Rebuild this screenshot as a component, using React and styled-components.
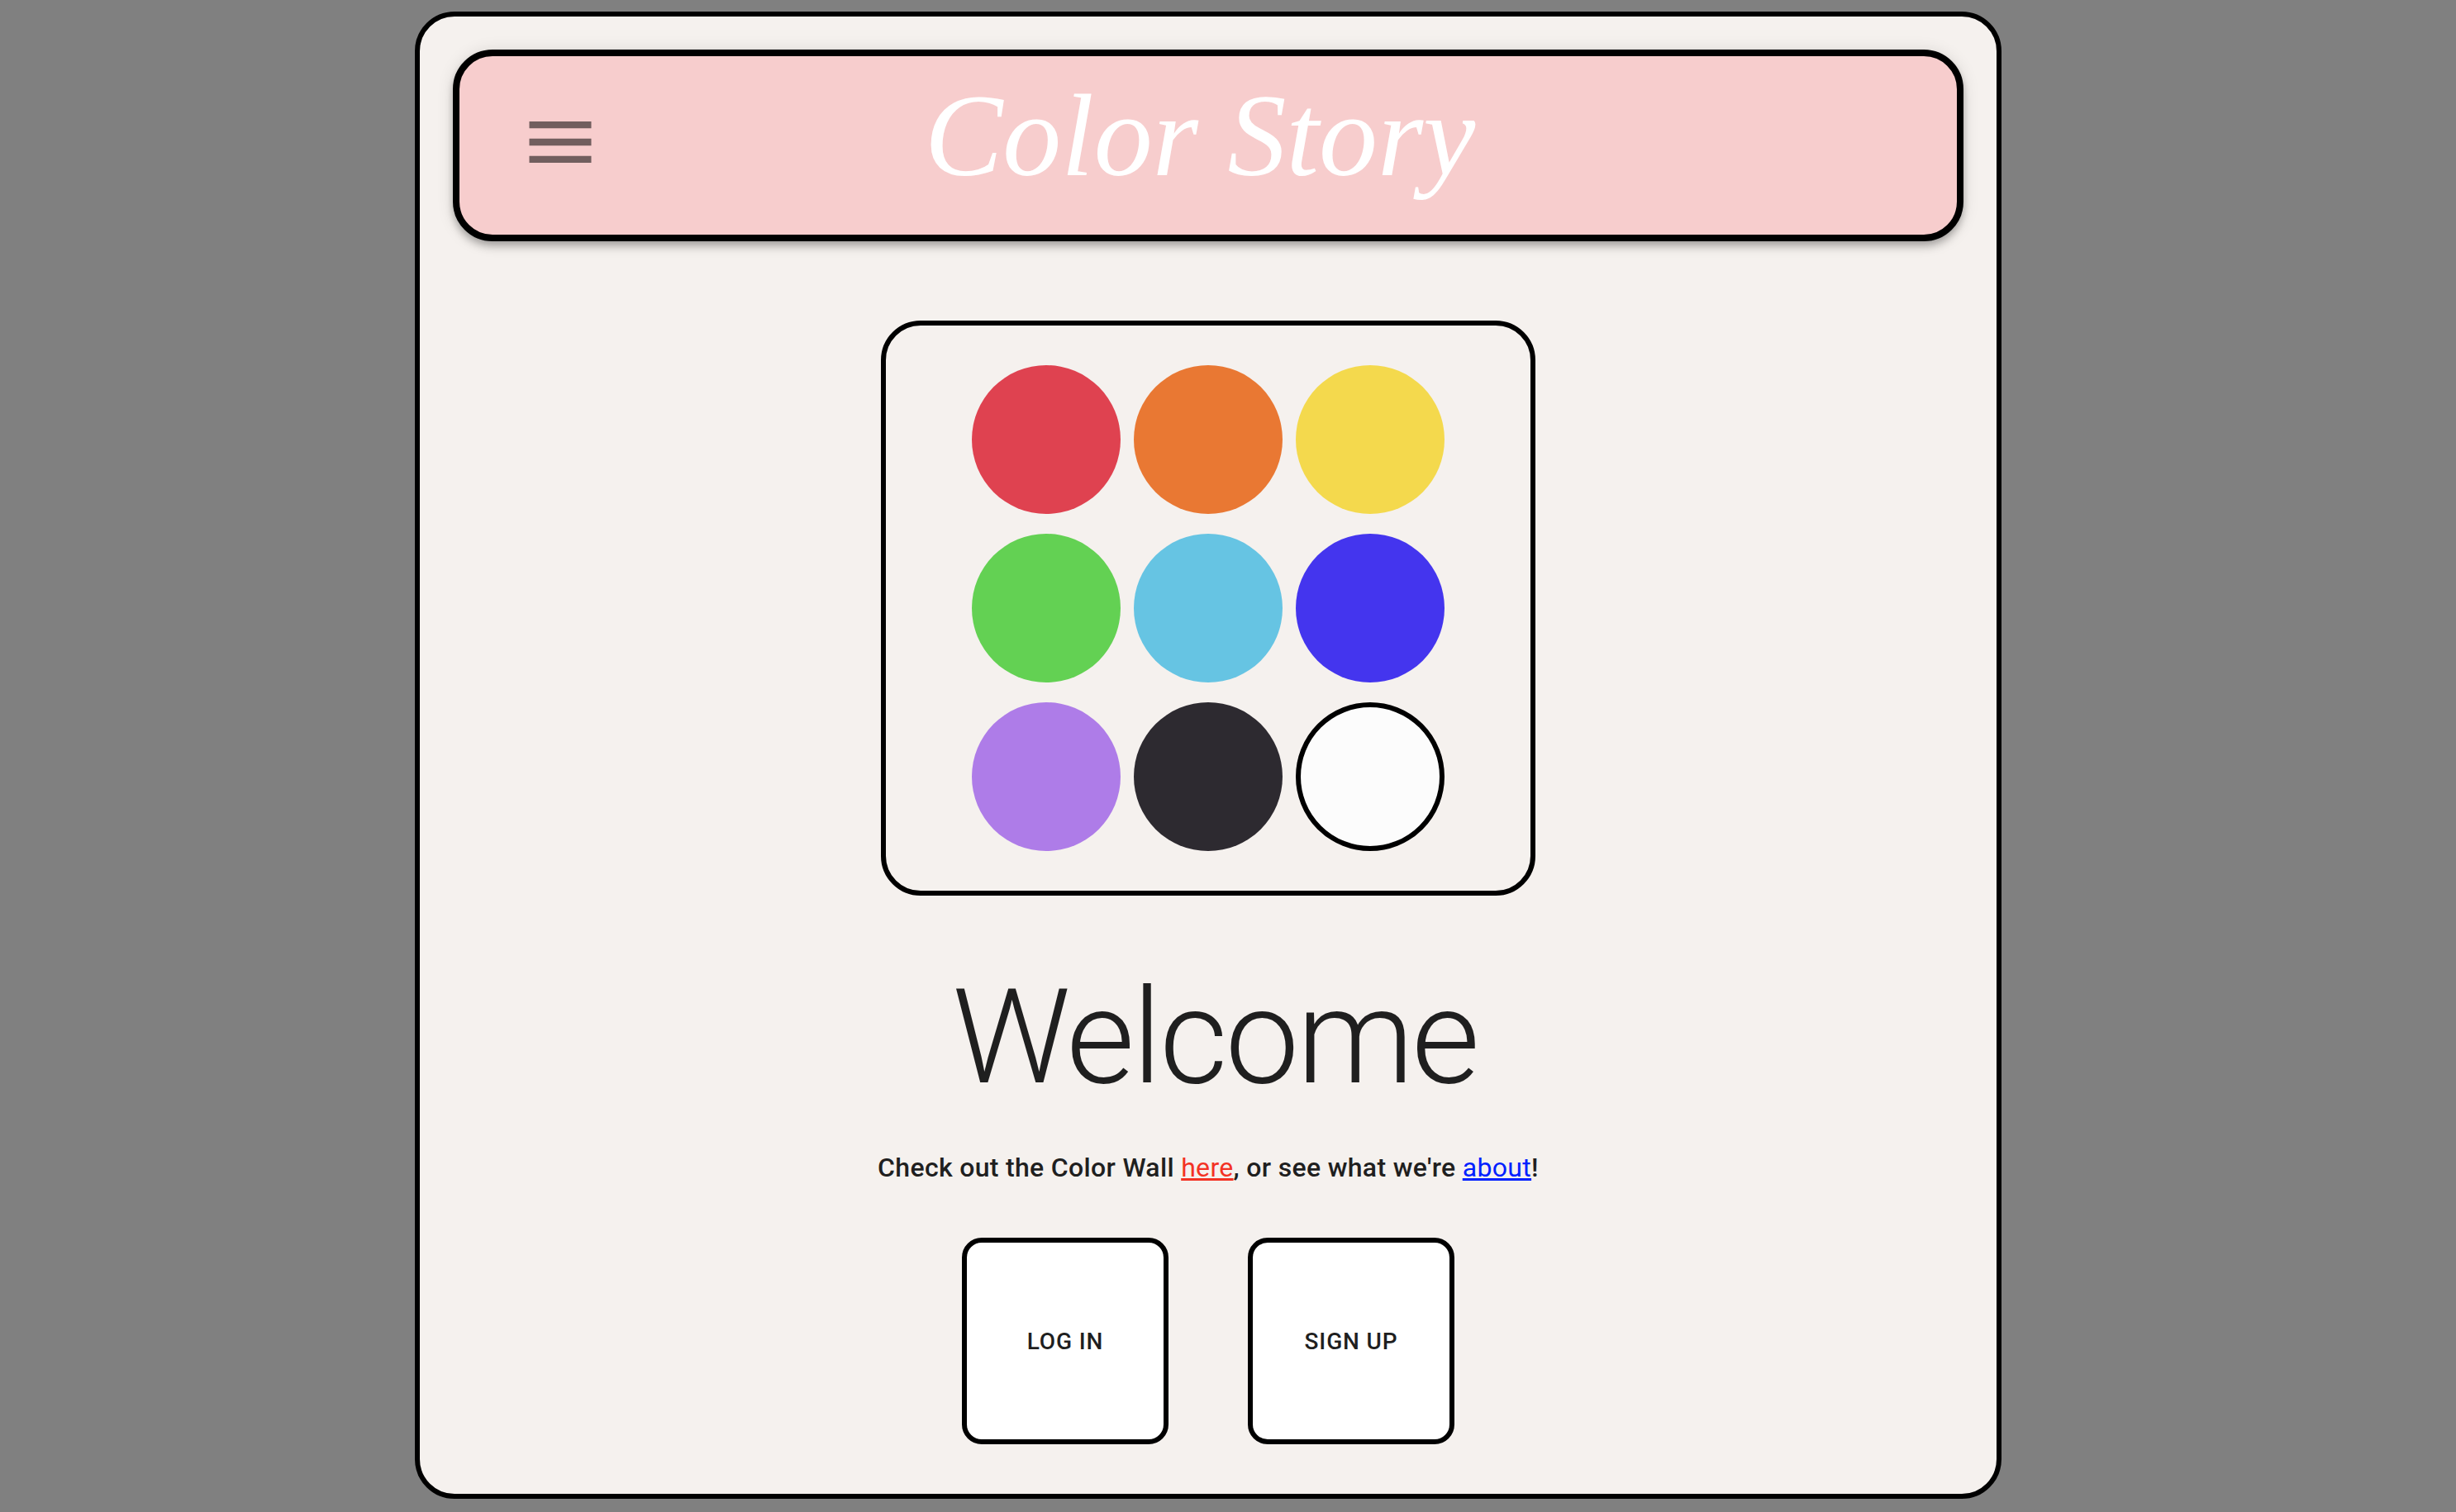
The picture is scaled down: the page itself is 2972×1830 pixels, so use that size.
import React from "react";
import styled, { createGlobalStyle } from "styled-components";

const GlobalStyle = createGlobalStyle`
  *, *::before, *::after { box-sizing: border-box; }
  body {
    margin: 0;
    background: #808080;
    color: #1f1f1f;
    font-family: Roboto, "Liberation Sans", sans-serif;
  }
`;

const Page = styled.div`
  display: flex;
  justify-content: center;
  padding: 14px 48px 16px 0;
`;

const Frame = styled.div`
  display: flex;
  flex-direction: column;
  align-items: center;
  width: 100%;
  max-width: 1920px;
  padding: 40px 40px 60px;
  border: 6px solid #000;
  border-radius: 48px;
  background: #f5f1ee;
`;

const Header = styled.header`
  display: grid;
  grid-template-columns: 1fr auto 1fr;
  align-items: center;
  width: 100%;
  padding: 24px 48px 32px;
  border: 8px solid #000;
  border-radius: 48px;
  background: #f7cdcd;
  box-shadow:
    0 4px 8px -2px rgba(0, 0, 0, 0.2),
    0 8px 10px 0 rgba(0, 0, 0, 0.14),
    0 2px 20px 0 rgba(0, 0, 0, 0.12);
`;

const MenuButton = styled.button`
  display: flex;
  justify-self: start;
  padding: 24px;
  border: 0;
  border-radius: 50%;
  background: transparent;
  color: rgba(0, 0, 0, 0.54);
  cursor: pointer;
`;

const MenuIcon = styled.svg`
  width: 100px;
  height: 100px;
  fill: currentColor;
`;

const Brand = styled.span`
  padding: 0 20px 16px 0;
  color: #fff;
  font-family: "Liberation Serif", serif;
  font-size: 142px;
  font-style: italic;
  line-height: 144px;
`;

const Main = styled.main`
  display: flex;
  flex-direction: column;
  align-items: center;
  margin-top: 96px;
`;

const Palette = styled.div`
  display: grid;
  grid-template-columns: repeat(3, 180px);
  gap: 24px 16px;
  padding: 48px 104px;
  border: 6px solid #000;
  border-radius: 48px;
`;

const Swatch = styled.button`
  height: 180px;
  padding: 0;
  border: ${(p) => (p.$outlined ? "6px solid #000" : "0")};
  border-radius: 50%;
  background: ${(p) => p.$color};
  cursor: pointer;
`;

const Title = styled.h1`
  margin: 80px 0 0;
  padding-left: 16px;
  font-size: 160px;
  font-weight: 300;
  line-height: 184px;
  letter-spacing: -3px;
`;

const Lead = styled.p`
  margin: 40px 0 0;
  font-size: 32px;
  font-weight: 500;
  line-height: 50px;
  letter-spacing: 0.01em;
`;

const TextLink = styled.a`
  color: ${(p) => p.$color};
  font-weight: 400;
`;

const Actions = styled.div`
  display: flex;
  gap: 96px;
  margin-top: 60px;
`;

const ActionButton = styled.button`
  width: 250px;
  height: 250px;
  border: 6px solid #000;
  border-radius: 24px;
  background: #fff;
  color: #1f1f1f;
  font-family: inherit;
  font-size: 28px;
  font-weight: 500;
  letter-spacing: 0.03em;
  text-transform: uppercase;
  cursor: pointer;
`;

const swatches = [
  { name: "Red", color: "#df4250" },
  { name: "Orange", color: "#e97833" },
  { name: "Yellow", color: "#f4d94d" },
  { name: "Green", color: "#63d153" },
  { name: "Light blue", color: "#66c4e3" },
  { name: "Blue", color: "#4435ee" },
  { name: "Purple", color: "#ae7ce8" },
  { name: "Black", color: "#2d2a30" },
  { name: "White", color: "#fcfcfc", outlined: true },
];

export default function App() {
  return (
    <>
      <GlobalStyle />
      <Page>
        <Frame>
          <Header>
            <MenuButton type="button" aria-label="Menu">
              <MenuIcon viewBox="0 0 24 24" aria-hidden="true">
                <path d="M3 18h18v-2H3v2zm0-5h18v-2H3v2zm0-7v2h18V6H3z" />
              </MenuIcon>
            </MenuButton>
            <Brand>Color Story</Brand>
          </Header>
          <Main>
            <Palette>
              {swatches.map((s) => (
                <Swatch
                  key={s.name}
                  type="button"
                  aria-label={s.name}
                  $color={s.color}
                  $outlined={s.outlined}
                />
              ))}
            </Palette>
            <Title>Welcome</Title>
            <Lead>
              Check out the Color Wall{" "}
              <TextLink href="#wall" $color="#f33224">here</TextLink>, or see what we're{" "}
              <TextLink href="#about" $color="#0020ff">about</TextLink>!
            </Lead>
            <Actions>
              <ActionButton type="button">Log in</ActionButton>
              <ActionButton type="button">Sign up</ActionButton>
            </Actions>
          </Main>
        </Frame>
      </Page>
    </>
  );
}
